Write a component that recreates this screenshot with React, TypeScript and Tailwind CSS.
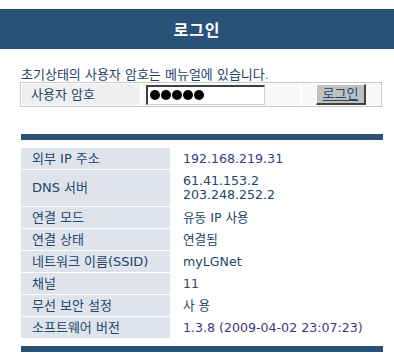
import React from "react";

const rows: { label: string; value: React.ReactNode; tall?: boolean; num?: boolean }[] = [
  { label: "외부 IP 주소", value: "192.168.219.31", num: true },
  { label: "DNS 서버", value: (<><div>61.41.153.2</div><div>203.248.252.2</div></>), tall: true },
  { label: "연결 모드", value: "유동 IP 사용" },
  { label: "연결 상태", value: "연결됨" },
  { label: "네트워크 이름(SSID)", value: "myLGNet" },
  { label: "채널", value: "11", num: true },
  { label: "무선 보안 설정", value: "사 용" },
  { label: "소프트웨어 버전", value: "1.3.8 (2009-04-02 23:07:23)", num: true },
];

const kr = { fontFamily: '"DejaVu Sans", "Noto Sans CJK KR", sans-serif' };

export default function App() {
  return (
    <div
      className="w-[394px] h-[360px] bg-white overflow-hidden text-[12.6px] leading-[14px] text-[#23456b]"
      style={kr}
    >
      <div className="mt-[9px] h-[40px] bg-[#2a5176] flex items-center justify-center">
        <span className="text-white text-[16px] font-bold tracking-[1px]" style={{ fontFamily: '"Noto Sans CJK KR", sans-serif' }}>로그인</span>
      </div>

      <div className="ml-[20px] w-[363px]">
        <div className="mt-[19px] h-[14px] pl-[1px] text-[#1f3e66] text-[13px] whitespace-nowrap" style={kr}>
          초기상태의 사용자 암호는 메뉴얼에 있습니다<span className="text-[#3a8cc0]">.</span>
        </div>

        <div className="mt-[0px] w-[362px] h-[25px] border border-[#c8c8c8] p-[1px] flex gap-[2px] bg-white">
          <div className="w-[118px] bg-[#efefef] flex items-center pl-[9px] text-[13px]" style={kr}>
            사용자 암호
          </div>
          <div className="w-[158px] bg-[#f8f8f8] flex items-center pl-[4px]">
            <div className="w-[119px] h-[20px] bg-white border-t-2 border-l-2 border-t-[#404040] border-l-[#404040] border-b border-r border-b-[#d4d0c8] border-r-[#d4d0c8] flex items-center gap-[1px] pl-[2px]">
              {[0, 1, 2, 3, 4].map((i) => (
                <span key={i} className="w-[10px] h-[10px] rounded-full bg-black inline-block" />
              ))}
            </div>
          </div>
          <div className="flex-1 bg-[#f8f8f8] flex items-center pl-[14px]">
            <div className="w-[50px] h-[21px] bg-[#c0c0c0] border-t border-l border-t-white border-l-white border-b-2 border-r-2 border-b-[#404040] border-r-[#404040] flex items-center justify-center text-[#23456b] text-[13px] underline underline-offset-[2px]" style={kr}>
              로그인
            </div>
          </div>
        </div>

        <div className="mt-[27px] ml-[1px] w-[362px] h-[6px] bg-[#2a5176]" />

        <div className="mt-[8px] ml-[1px] w-[362px] flex flex-col gap-[1px]">
          {rows.map((r) => (
            <div key={r.label} className={`flex ${r.tall ? "h-[36px]" : "h-[21px]"}`}>
              <div className="w-[149px] bg-[#dfe4ec] flex items-center pl-[11px] text-[13px] whitespace-nowrap" style={kr}>
                {r.label}
              </div>
              <div
                className={`flex-1 flex flex-col justify-center pl-[13px] whitespace-nowrap ${r.num ? "text-[#3b3a7e]" : "text-[#23456b]"}`}
                style={kr}
              >
                {r.value}
              </div>
            </div>
          ))}
        </div>

        <div className="mt-[8px] ml-[1px] w-[362px] h-[6px] bg-[#2a5176]" />
      </div>
    </div>
  );
}
